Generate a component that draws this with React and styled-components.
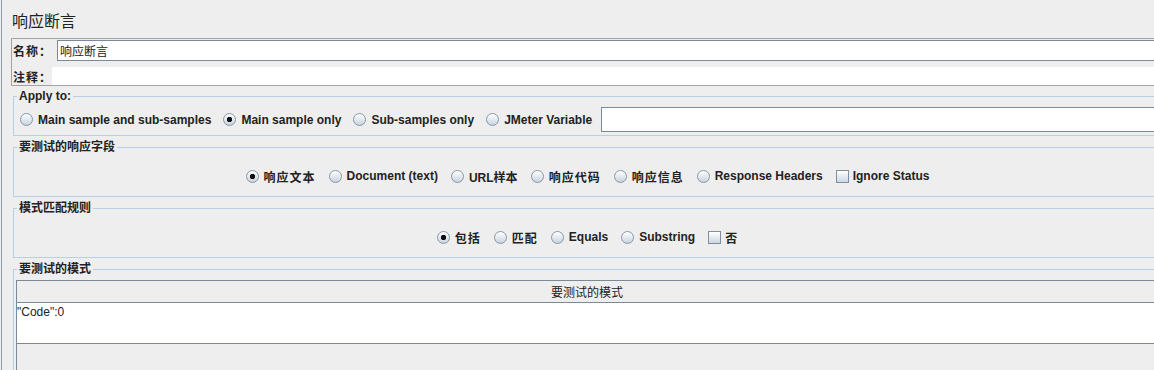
import React from 'react'
import styled, { createGlobalStyle } from 'styled-components'

const GlobalStyle = createGlobalStyle`
  html, body {
    margin: 0;
    padding: 0;
    background: #eeeeee;
    overflow: hidden;
  }
  body {
    font-family: "Liberation Sans", "Noto Sans CJK SC", sans-serif;
    font-size: 12px;
    color: #222;
  }
`

const Page = styled.div`
  margin-left: 1px;
  border-left: 1px solid #8e9ba8;
  height: 370px;
  width: 1170px;
  padding-left: 9px;
  box-sizing: border-box;
`

const Title = styled.div`
  height: 38px;
  padding: 10px 0 0 1px;
  box-sizing: border-box;
  font-size: 16px;
  line-height: 21px;
  font-family: "Noto Sans CJK SC", sans-serif;
`

const NameBox = styled.div`
  width: 1151px;
  height: 48px;
  border: 1px solid #a3a3a3;
  padding-top: 1px;
  box-sizing: border-box;
`

const NameRow = styled.div`
  display: flex;
  align-items: center;
  height: ${p => p.$h}px;
  margin-top: ${p => p.$top || 0}px;
`

const NameLabel = styled.span`
  width: ${p => p.$w}px;
  padding-left: 1px;
  box-sizing: border-box;
  font-weight: 700;
  letter-spacing: 1px;
  flex: none;
`

const TextField = styled.div`
  flex: 1;
  align-self: stretch;
  background: #fff;
  border: 1px solid ${p => (p.$plain ? '#fff' : '#7a8a99')};
  border-right: none;
  padding-left: 2px;
  display: flex;
  align-items: center;
  box-sizing: border-box;
`

const Group = styled.fieldset`
  margin: ${p => (p.$first ? 3 : 4)}px 0 0 2px;
  padding: 0;
  width: 1149px;
  min-width: 0;
  box-sizing: border-box;
  border: 1px solid #b8cfe5;
  height: ${p => (p.$h ? `${p.$h}px` : 'auto')};
`

const Legend = styled.legend`
  margin-left: 3px;
  padding: 0 2px;
  font-weight: 700;
  line-height: 14px;
  font-size: 12px;
`

const ApplyRow = styled.div`
  display: flex;
  align-items: center;
  gap: 12px;
  height: 25px;
  padding: 4px 0 3px 6px;
`

const ChoiceRow = styled.div`
  display: flex;
  align-items: center;
  justify-content: center;
  gap: 13px;
  height: 42px;
  padding-top: 2px;
  box-sizing: border-box;
`

const Option = styled.label`
  display: inline-flex;
  align-items: center;
  font-weight: 700;
  white-space: nowrap;
  letter-spacing: ${p => (p.$cjk ? '1px' : 'normal')};
`

const Radio = styled.span`
  flex: none;
  width: 13px;
  height: 13px;
  border-radius: 50%;
  border: 1px solid #8797a8;
  box-sizing: border-box;
  margin-right: 5px;
  background: ${p => (p.$checked
    ? 'radial-gradient(circle, #111 2.4px, transparent 3px), linear-gradient(#ffffff, #c7d3df)'
    : 'linear-gradient(#ffffff, #c7d3df)')};
`

const Check = styled.span`
  flex: none;
  width: 13px;
  height: 13px;
  border: 1px solid #7f8fa0;
  box-sizing: border-box;
  margin-right: 4px;
  background: linear-gradient(#ffffff, #cbd7e3);
`

const VarField = styled.div`
  flex: 1;
  height: 25px;
  margin-left: -3px;
  background: #fff;
  border: 1px solid #7a8a99;
  border-right: none;
  box-sizing: border-box;
`

const Table = styled.div`
  margin: 4px 0 0 2px;
  border-top: 1px solid #7a8a99;
  border-left: 1px solid #7a8a99;
  height: 100px;
`

const TableHead = styled.div`
  height: 21px;
  border-bottom: 1px solid #7a8a99;
  display: flex;
  align-items: center;
  justify-content: center;
  padding-right: 4px;
`

const TableBody = styled.div`
  height: 39px;
  background: #fff;
  border-bottom: 1px solid #7a8a99;
  line-height: 16px;
  padding-top: 1px;
`

const Choice = ({ label, checked, cjk }) => (
  <Option $cjk={cjk}>
    <Radio $checked={checked} />
    {label}
  </Option>
)

const Tick = ({ label, cjk }) => (
  <Option $cjk={cjk}>
    <Check />
    {label}
  </Option>
)

export default function App() {
  return (
    <Page>
      <GlobalStyle />
      <Title>响应断言</Title>
      <NameBox>
        <NameRow $h={21}>
          <NameLabel $w={45}>名称：</NameLabel>
          <TextField>响应断言</TextField>
        </NameRow>
        <NameRow $h={18} $top={6}>
          <NameLabel $w={40}>注释：</NameLabel>
          <TextField $plain />
        </NameRow>
      </NameBox>

      <Group $first>
        <Legend>Apply to:</Legend>
        <ApplyRow>
          <Choice label="Main sample and sub-samples" />
          <Choice label="Main sample only" checked />
          <Choice label="Sub-samples only" />
          <Choice label="JMeter Variable" />
          <VarField />
        </ApplyRow>
      </Group>

      <Group>
        <Legend>要测试的响应字段</Legend>
        <ChoiceRow>
          <Choice label="响应文本" checked cjk />
          <Choice label="Document (text)" />
          <Choice label="URL样本" />
          <Choice label="响应代码" cjk />
          <Choice label="响应信息" cjk />
          <Choice label="Response Headers" />
          <Tick label="Ignore Status" />
        </ChoiceRow>
      </Group>

      <Group>
        <Legend>模式匹配规则</Legend>
        <ChoiceRow>
          <Choice label="包括" checked cjk />
          <Choice label="匹配" cjk />
          <Choice label="Equals" />
          <Choice label="Substring" />
          <Tick label="否" cjk />
        </ChoiceRow>
      </Group>

      <Group $h={140}>
        <Legend>要测试的模式</Legend>
        <Table>
          <TableHead>要测试的模式</TableHead>
          <TableBody>"Code":0</TableBody>
        </Table>
      </Group>
    </Page>
  )
}
